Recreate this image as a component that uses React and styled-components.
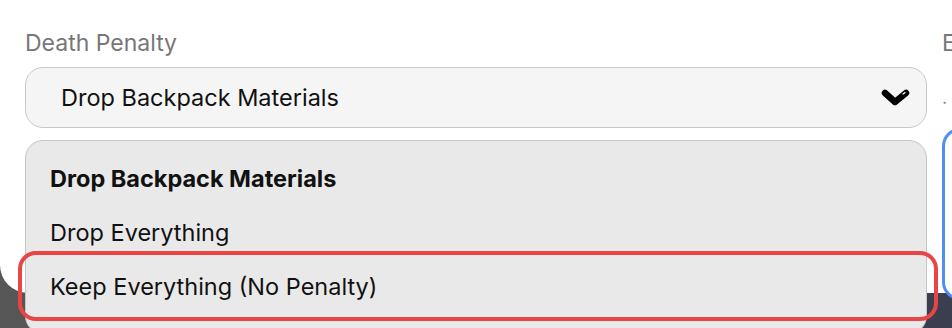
import React from 'react';
import styled, { createGlobalStyle } from 'styled-components';

const Global = createGlobalStyle`
  html, body { margin: 0; padding: 0; }
  body {
    font-family: Inter, "Noto Sans", sans-serif;
    background: #4a4c55;
  }
`;

const Backdrop = styled.div`
  width: 952px;
  height: 328px;
  overflow: hidden;
  position: relative;
  background: linear-gradient(90deg, #575757 0%, #4b4d56 50%, #3a3e4f 100%);
`;

const Dialog = styled.div`
  width: 1120px;
  height: 293px;
  background: #fff;
  border-radius: 0 0 28px 28px;
  padding: 30px 0 0 25px;
  box-sizing: border-box;
  display: grid;
  grid-template-columns: 902px 1fr;
  column-gap: 15px;
`;

const Field = styled.div`
  display: flex;
  flex-direction: column;
  gap: 11px;
`;

const Label = styled.div`
  font-size: 23px;
  line-height: 26px;
  color: #777;
  white-space: nowrap;
`;

const SelectWrap = styled.div`
  position: relative;
`;

const Select = styled.div`
  height: 61px;
  box-sizing: border-box;
  border: 1.5px solid #c9c9c9;
  border-radius: 18px;
  background: #f5f5f5;
  display: flex;
  align-items: center;
  justify-content: space-between;
  padding: 0 15px 0 35px;
  font-size: 23.5px;
  color: #111;
`;

const Menu = styled.div`
  position: absolute;
  left: 0;
  right: 0;
  top: calc(100% + 12px);
  background: #e9e9e9;
  border: 1.5px solid #c6c6c6;
  border-radius: 18px;
  padding: 10px 0 20px;
  z-index: 2;
`;

const Item = styled.div`
  height: 54px;
  display: flex;
  align-items: center;
  padding-left: 24px;
  font-size: 23.5px;
  color: #111;
  font-weight: ${p => (p.$selected ? 700 : 400)};
  border-radius: 10px;
  outline: ${p => (p.$focused ? '4px solid #ea4545' : 'none')};
  outline-offset: 4px;
  margin: 0 ${p => (p.$focused ? '-4px' : '0')} 0 0;
`;

const Side = styled.div`
  display: flex;
  flex-direction: column;
`;

const Hint = styled.div`
  font-size: 18px;
  color: #888;
  height: 48px;
  padding-top: 42px;
  box-sizing: border-box;
  line-height: 10px;
`;

const BlueBox = styled.div`
  margin-top: 24px;
  height: 172px;
  box-sizing: border-box;
  border: 3px solid #4f8ff0;
  border-radius: 18px;
  background: #fff;
`;

const Chevron = () => (
  <svg width="30" height="20" viewBox="0 0 30 20">
    <polyline
      points="4,5 14,14 25,5"
      fill="none"
      stroke="#000"
      strokeWidth="6.5"
      strokeLinecap="round"
      strokeLinejoin="round"
    />
    <line x1="22" y1="6" x2="24" y2="4.5" stroke="#fff" strokeWidth="1.2" strokeLinecap="round" />
  </svg>
);

const options = ['Drop Backpack Materials', 'Drop Everything', 'Keep Everything (No Penalty)'];

export default function App() {
  return (
    <Backdrop>
      <Global />
      <Dialog>
        <Field>
          <Label>Death Penalty</Label>
          <SelectWrap>
            <Select>
              <span>Drop Backpack Materials</span>
              <Chevron />
            </Select>
            <Menu>
              {options.map((o, i) => (
                <Item key={o} $selected={i === 0} $focused={i === 2}>
                  {o}
                </Item>
              ))}
            </Menu>
          </SelectWrap>
        </Field>
        <Side>
          <Label>Extra Settings</Label>
          <Hint>·</Hint>
          <BlueBox />
        </Side>
      </Dialog>
    </Backdrop>
  );
}
